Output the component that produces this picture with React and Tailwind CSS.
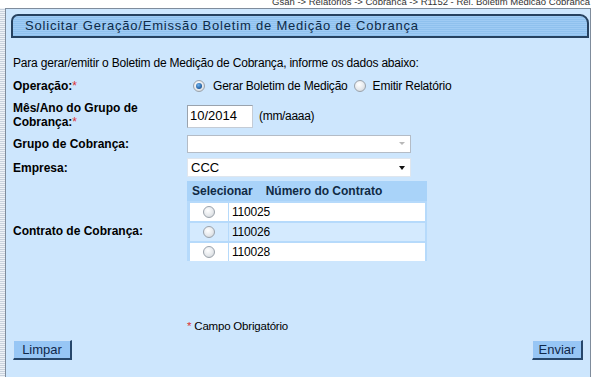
export default function App() {
  const contratos = ['110025', '110026', '110028']

  return (
    <div className="w-[595px] h-[377px] overflow-hidden bg-white font-['Liberation_Sans',Arial,sans-serif] text-[12px] tracking-[-0.2px] text-black">
      {/* breadcrumb, cortado no topo */}
      <div className="h-[8px] overflow-hidden text-right pr-[5px]">
        <div className="-mt-[4px] text-[9.5px] leading-[11px] tracking-normal text-[#333]">
          Gsan -&gt; Relatorios -&gt; Cobranca -&gt; R1152 - Rel. Boletim Medicao Cobranca
        </div>
      </div>

      <div className="flex h-[369px]">
        <div className="w-[5px] bg-[repeating-linear-gradient(180deg,#eef2f7_0px,#eef2f7_1px,#c9d2dd_1px,#c9d2dd_2px)]" />

        <div className="w-[586px] border-l border-t border-r border-[#7f8c9c] bg-[#cde6fd] flex flex-col">
          {/* titulo */}
          <div className="mt-[5px] ml-[5px] mr-[1px] h-[24px] border-2 border-[#26415f] rounded-tl-[7px] rounded-tr-[9px] bg-[repeating-linear-gradient(180deg,#9fcbf4_0px,#9fcbf4_1px,#8fc1ee_1px,#8fc1ee_2px)] flex items-center pl-[12px]">
            <span className="text-[13px] tracking-[0.8px] text-[#0d2a48]">
              Solicitar Geração/Emissão Boletim de Medição de Cobrança
            </span>
          </div>

          <div className="pl-[7px] flex flex-col">
            <div className="h-[22px] mt-[14px] flex items-center">
              Para gerar/emitir o Boletim de Medição de Cobrança, informe os dados abaixo:
            </div>

            <div className="h-[24px] flex items-center">
              <div className="w-[174px] font-bold tracking-normal">
                Operação:<span className="text-[#d33] font-normal">*</span>
              </div>
              <Radio checked className="ml-[6px]" />
              <span className="ml-[8px]">Gerar Boletim de Medição</span>
              <Radio className="ml-[6px]" />
              <span className="ml-[7px]">Emitir Relatório</span>
            </div>

            <div className="h-[33px] flex items-center">
              <div className="w-[174px] font-bold tracking-normal leading-[14px]">
                Mês/Ano do Grupo de
                <br />
                Cobrança:<span className="text-[#d33] font-normal">*</span>
              </div>
              <div className="mt-[3px] w-[66px] h-[23px] bg-white border border-[#c4ccd6] border-t-[#9aa3ad] border-l-[#9aa3ad] flex items-center pl-[2px] text-[13px] tracking-normal">
                10/2014
              </div>
              <span className="ml-[6px] mt-[3px] tracking-[-0.3px]">(mm/aaaa)</span>
            </div>

            <div className="h-[25px] flex items-center">
              <div className="w-[174px] font-bold tracking-normal">Grupo de Cobrança:</div>
              <div className="w-[224px] h-[18px] bg-white border border-[#b4bcc6] flex items-center justify-end pr-[5px]">
                <span className="w-0 h-0 border-l-[3px] border-r-[3px] border-t-[3px] border-l-transparent border-r-transparent border-t-[#b8b8b8]" />
              </div>
            </div>

            <div className="h-[23px] flex items-center">
              <div className="w-[174px] font-bold tracking-normal">Empresa:</div>
              <div className="w-[224px] h-[19px] bg-white border border-[#dfe6ee] flex items-center justify-between pl-[3px] pr-[5px] text-[13px] tracking-normal">
                <span>CCC</span>
                <span className="w-0 h-0 border-l-[3.5px] border-r-[3.5px] border-t-[4px] border-l-transparent border-r-transparent border-t-[#111]" />
              </div>
            </div>

            <div className="flex h-[84px] pt-[2px]">
              <div className="w-[174px] font-bold tracking-normal pt-[41px]">Contrato de Cobrança:</div>
              <div className="w-[240px] h-[80px] bg-[#b6dafb] pl-[3px] pr-[2px] flex flex-col">
                <div className="h-[20px] bg-[#a9d3f9] -ml-[3px] -mr-[2px] pl-[5px] flex items-center font-bold tracking-normal text-[#102a44]">
                  <span>Selecionar</span>
                  <span className="ml-[13px]">Número do Contrato</span>
                </div>
                {contratos.map((c, i) => (
                  <div key={c} className="flex gap-[1px] h-[18px] mt-[2px]">
                    <div className={`w-[38px] flex items-center justify-center ${i === 1 ? 'bg-[#d4eafe]' : 'bg-white'}`}>
                      <Radio />
                    </div>
                    <div className={`flex-1 flex items-center pl-[3px] ${i === 1 ? 'bg-[#d4eafe]' : 'bg-white'}`}>
                      {c}
                    </div>
                  </div>
                ))}
              </div>
            </div>

            <div className="h-[16px] mt-[56px] pl-[174px] flex items-center text-[11.5px]">
              <span className="text-[#d33] mr-[3px]">*</span>
              <span>Campo Obrigatório</span>
            </div>

            <div className="mt-[5px] flex justify-between pr-[7px]">
              <Button className="w-[59px]">Limpar</Button>
              <Button className="w-[51px]">Enviar</Button>
            </div>
          </div>
        </div>
      </div>
    </div>
  )
}

function Radio({ checked, className = '' }) {
  return (
    <span
      className={`w-[12px] h-[12px] rounded-full border border-[#9aa2ab] bg-[radial-gradient(circle_at_40%_35%,#ffffff_0%,#e6e9ec_55%,#c8cdd2_100%)] flex items-center justify-center ${className}`}
    >
      {checked && <span className="w-[6px] h-[6px] rounded-full bg-[radial-gradient(circle_at_40%_35%,#6fb3f0_0%,#1d5a9c_70%,#12406f_100%)]" />}
    </span>
  )
}

function Button({ children, className = '' }) {
  return (
    <div className={`h-[20px] bg-[#97c6f5] border border-[#cfe5fb] border-r-2 border-b-2 border-r-[#27476b] border-b-[#27476b] flex items-center justify-center text-[13px] tracking-normal text-[#10284a] ${className}`}>
      {children}
    </div>
  )
}
